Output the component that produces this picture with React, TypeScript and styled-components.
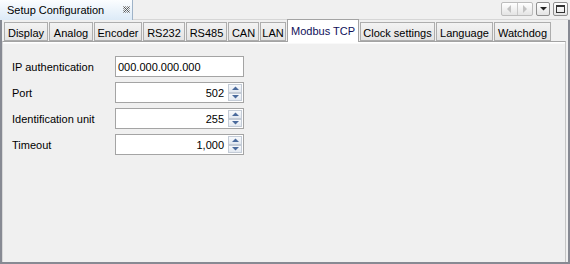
import React from "react";
import styled, { createGlobalStyle } from "styled-components";

const GlobalStyle = createGlobalStyle`
  html, body {
    margin: 0;
    padding: 0;
    background: #f0f0f0;
  }
  body {
    font-family: "Liberation Sans", Arial, sans-serif;
    font-size: 11px;
    color: #000;
  }
`;

const View = styled.div`
  width: 570px;
  height: 264px;
  display: flex;
  flex-direction: column;
  background: #f0f0f0;
  box-sizing: border-box;
  overflow: hidden;
`;

const Header = styled.div`
  height: 20px;
  display: flex;
  flex-shrink: 0;
`;

const TitleTab = styled.div`
  width: 133px;
  box-sizing: border-box;
  display: flex;
  align-items: center;
  padding: 0 0 1px 7px;
  background: linear-gradient(#fbfdff, #dceaf7);
  border-right: 1px solid #9fb3c8;
  gap: 19px;
`;

const HeaderFill = styled.div`
  flex: 1;
  display: flex;
  justify-content: flex-end;
  align-items: flex-start;
  gap: 3px;
  padding: 2px 2px 0 0;
  border-bottom: 1px solid #d6d6d6;
`;

const ViewButton = styled.div<{ $w: number; $disabled?: boolean }>`
  width: ${(p) => p.$w}px;
  height: 14px;
  box-sizing: border-box;
  border: 1px solid ${(p) => (p.$disabled ? "#bcbcbc" : "#8f8f8f")};
  border-radius: 2px;
  background: linear-gradient(#ffffff, #e4e4e4);
  display: flex;
  align-items: center;
  justify-content: center;
`;

const PairHalf = styled.div<{ $divider?: boolean }>`
  flex: 1;
  height: 100%;
  display: flex;
  align-items: center;
  justify-content: center;
  border-right: ${(p) => (p.$divider ? "1px solid #c8c8c8" : "none")};
`;

const Body = styled.div`
  flex: 1;
  display: flex;
  flex-direction: column;
  border: 2px solid #878a93;
  border-top: none;
  padding-top: 2px;
  min-height: 0;
`;

const TabRow = styled.div`
  height: 19px;
  display: flex;
  align-items: flex-end;
  gap: 1px;
  padding-left: 2px;
  flex-shrink: 0;
`;

const Tab = styled.div<{ $w: number; $active?: boolean }>`
  position: relative;
  z-index: ${(p) => (p.$active ? 1 : 0)};
  width: ${(p) => p.$w}px;
  height: ${(p) => (p.$active ? 23 : 19)}px;
  margin-bottom: ${(p) => (p.$active ? -1 : 0)}px;
  box-sizing: border-box;
  display: flex;
  align-items: center;
  justify-content: center;
  padding-top: ${(p) => (p.$active ? 0 : 2)}px;
  white-space: nowrap;
  border: 1px solid ${(p) => (p.$active ? "#a3a3a3" : "#adadad")};
  border-bottom: ${(p) => (p.$active ? "none" : "1px solid #adadad")};
  background: ${(p) =>
    p.$active ? "#ffffff" : "linear-gradient(#f3f3f3, #e3e3e3)"};
  color: ${(p) => (p.$active ? "#10105a" : "#000")};
`;

const Pane = styled.div`
  flex: 1;
  margin-right: 2px;
  border-top: 1px solid #a3a3a3;
  border-right: 1px solid #c6c6c6;
  border-left: 1px solid #d8d8d8;
  box-shadow: inset 0 1px 0 #ffffff, inset 0 2px 0 #f9f9f9;
  padding: 14px 0 0 9px;
  display: flex;
  flex-direction: column;
  gap: 5px;
`;

const FormRow = styled.div`
  display: flex;
  align-items: center;
  height: 21px;
`;

const Label = styled.div`
  width: 103px;
`;

const Field = styled.div`
  width: 129px;
  height: 21px;
  box-sizing: border-box;
  border: 1px solid #a4a4a4;
  background: #fff;
  display: flex;
  align-items: center;
`;

const FieldValue = styled.div<{ $right?: boolean }>`
  flex: 1;
  text-align: ${(p) => (p.$right ? "right" : "left")};
  padding: 0 4px 0 2px;
`;

const Spinner = styled.div`
  width: 14px;
  height: 17px;
  margin-right: 1px;
  display: flex;
  flex-direction: column;
`;

const SpinHalf = styled.div`
  flex: 1;
  box-sizing: border-box;
  border: 1px solid #c3cbd6;
  background: linear-gradient(#f7f9fc, #e2e8f0);
  display: flex;
  align-items: center;
  justify-content: center;
`;

const CloseIcon = () => {
  const cells: React.ReactElement[] = [];
  for (let y = 0; y < 7; y++) {
    for (let x = 0; x < 7; x++) {
      if ((x + y) % 2 !== 0) continue;
      const corner = (x === 0 || x === 6) && (y === 0 || y === 6);
      const diag = x === y || x === 6 - y;
      cells.push(
        <rect
          key={`${x}-${y}`}
          x={x}
          y={y}
          width={1}
          height={1}
          fill={diag && !corner ? "#555" : "#9a9a9a"}
        />
      );
    }
  }
  return (
    <svg width="7" height="7" viewBox="0 0 7 7" shapeRendering="crispEdges">
      {cells}
    </svg>
  );
};

const Arrow = ({ dir, color }: { dir: "left" | "right" | "up" | "down"; color: string }) => {
  const pts = {
    left: "4,0 4,8 0,4",
    right: "0,0 0,8 4,4",
    up: "0,4 7,4 3.5,0.5",
    down: "0,0 7,0 3.5,3.5",
  }[dir];
  const horiz = dir === "left" || dir === "right";
  return (
    <svg width={horiz ? 4 : 7} height={horiz ? 8 : 4} viewBox={horiz ? "0 0 4 8" : "0 0 7 4"}>
      <polygon points={pts} fill={color} />
    </svg>
  );
};

const MaximizeIcon = () => (
  <svg width="9" height="8" viewBox="0 0 9 8" shapeRendering="crispEdges">
    <rect x="0.5" y="0.5" width="8" height="7" fill="none" stroke="#333" />
    <rect x="0" y="0" width="9" height="2" fill="#333" />
  </svg>
);

const tabs: { name: string; w: number }[] = [
  { name: "Display", w: 44 },
  { name: "Analog", w: 44 },
  { name: "Encoder", w: 48 },
  { name: "RS232", w: 42 },
  { name: "RS485", w: 41 },
  { name: "CAN", w: 31 },
  { name: "LAN", w: 26 },
  { name: "Modbus TCP", w: 72 },
  { name: "Clock settings", w: 75 },
  { name: "Language", w: 57 },
  { name: "Watchdog", w: 57 },
];

const fields: { label: string; value: string; spin: boolean }[] = [
  { label: "IP authentication", value: "000.000.000.000", spin: false },
  { label: "Port", value: "502", spin: true },
  { label: "Identification unit", value: "255", spin: true },
  { label: "Timeout", value: "1,000", spin: true },
];

export default function App() {
  return (
    <View>
      <GlobalStyle />
      <Header>
        <TitleTab>
          <span>Setup Configuration</span>
          <CloseIcon />
        </TitleTab>
        <HeaderFill>
          <ViewButton $w={32} $disabled>
            <PairHalf $divider>
              <Arrow dir="left" color="#c2c2c2" />
            </PairHalf>
            <PairHalf>
              <Arrow dir="right" color="#c2c2c2" />
            </PairHalf>
          </ViewButton>
          <ViewButton $w={14}>
            <Arrow dir="down" color="#222" />
          </ViewButton>
          <ViewButton $w={15}>
            <MaximizeIcon />
          </ViewButton>
        </HeaderFill>
      </Header>
      <Body>
        <TabRow>
          {tabs.map((t) => (
            <Tab key={t.name} $w={t.w} $active={t.name === "Modbus TCP"}>
              {t.name}
            </Tab>
          ))}
        </TabRow>
        <Pane>
          {fields.map((f) => (
            <FormRow key={f.label}>
              <Label>{f.label}</Label>
              <Field>
                <FieldValue $right={f.spin}>{f.value}</FieldValue>
                {f.spin && (
                  <Spinner>
                    <SpinHalf>
                      <Arrow dir="up" color="#4a6a9c" />
                    </SpinHalf>
                    <SpinHalf>
                      <Arrow dir="down" color="#4a6a9c" />
                    </SpinHalf>
                  </Spinner>
                )}
              </Field>
            </FormRow>
          ))}
        </Pane>
      </Body>
    </View>
  );
}
